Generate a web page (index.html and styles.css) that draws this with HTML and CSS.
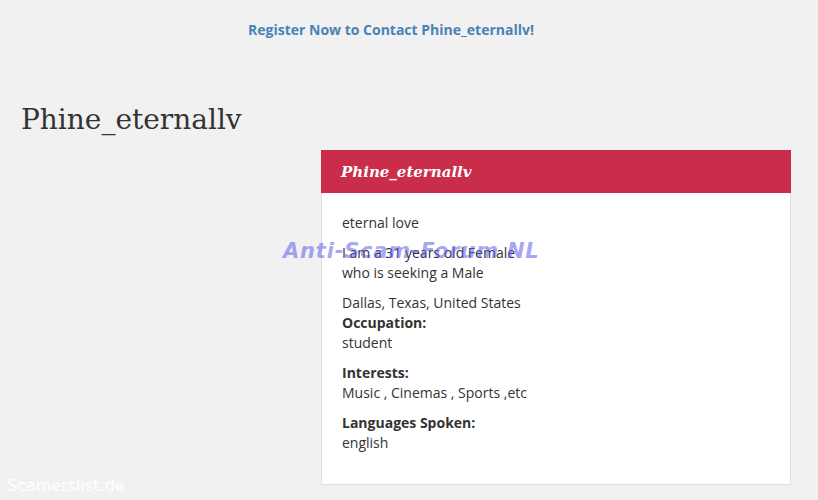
FILE: index.html
```html
<!DOCTYPE html>
<html>
<head>
<meta charset="utf-8">
<link rel="stylesheet" href="styles.css">
</head>
<body>
<div class="page">
  <div class="topbar"><a class="register" href="#">Register Now to Contact Phine_eternallv!</a></div>
  <h1 class="title">Phine_eternallv</h1>
  <div class="content">
    <div class="card">
      <div class="card-head">Phine_eternallv</div>
      <div class="card-body">
        <p>eternal love</p>
        <p>I am a 31 years old Female<br>who is seeking a Male</p>
        <p class="tight">Dallas, Texas, United States</p>
        <p><b>Occupation:</b><br>student</p>
        <p><b>Interests:</b><br>Music , Cinemas , Sports ,etc</p>
        <p><b>Languages Spoken:</b><br>english</p>
      </div>
    </div>
  </div>
</div>
<div class="watermark">Anti-Scam-Forum NL</div>
<div class="sitemark">Scamerslist.de</div>
</body>
</html>
```

FILE: styles.css
```css
html, body {
  margin: 0;
  padding: 0;
  background: #f1f1f1;
  font-family: "Open Sans", "Liberation Sans", sans-serif;
  color: #333;
}
.page {
  width: 818px;
  height: 500px;
  overflow: hidden;
}
.topbar {
  padding: 18px 0 0 248px;
  height: 22px;
  line-height: 22px;
}
.register {
  color: #4883b6;
  font-weight: 700;
  font-size: 14px;
  text-decoration: none;
}
.title {
  margin: 62px 0 0 21px;
  font-family: "DejaVu Serif", "Liberation Serif", serif;
  font-weight: 400;
  font-size: 28px;
  line-height: 36px;
  color: #333;
}
.content {
  display: flex;
  justify-content: flex-end;
  padding-right: 27px;
  margin-top: 12px;
}
.card {
  width: 468px;
  background: #fff;
  border: 1px solid #dfdfdf;
  border-top: 0;
}
.card-head {
  background: #c92d4a;
  color: #fff;
  height: 43px;
  line-height: 44px;
  margin: 0 -1px;
  padding-left: 20px;
  font-family: "DejaVu Serif", "Liberation Serif", serif;
  font-style: italic;
  font-weight: 700;
  font-size: 15px;
}
.card-body {
  padding: 20px 20px 21px;
  font-size: 14px;
  line-height: 20px;
}
.card-body p {
  margin: 0 0 10px;
}
.card-body p.tight {
  margin-bottom: 0;
}
.watermark {
  position: absolute;
  left: 283px;
  top: 239px;
  font-family: "DejaVu Sans", sans-serif;
  font-weight: 700;
  font-style: italic;
  font-size: 21px;
  letter-spacing: 0.8px;
  color: rgba(90, 90, 235, 0.55);
}
.sitemark {
  position: absolute;
  left: 7px;
  top: 476px;
  font-family: "DejaVu Sans", sans-serif;
  font-size: 16px;
  color: #fff;
}
```
